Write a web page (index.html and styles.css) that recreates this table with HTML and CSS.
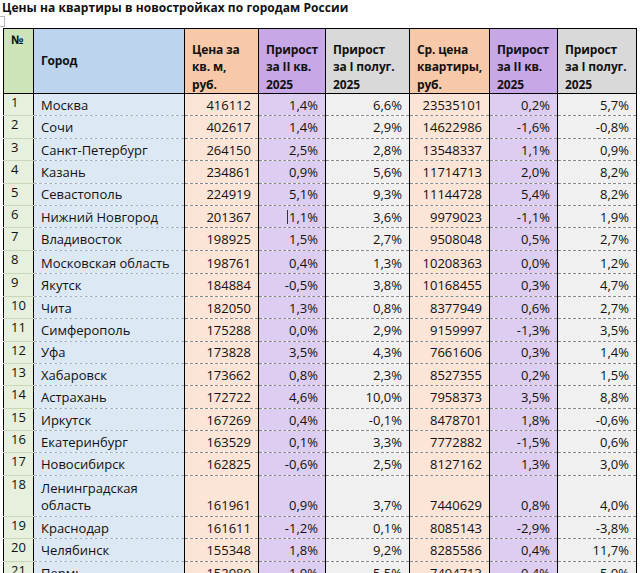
FILE: index.html
```html
<!DOCTYPE html>
<html lang="ru">
<head>
<meta charset="utf-8">
<title>Цены на квартиры</title>
<link rel="stylesheet" href="styles.css">
</head>
<body>
<div class="title">Цены на квартиры в новостройках по городам России</div>
<div class="gap"><span class="cellmark"></span></div>
<table class="grid">
<colgroup>
<col class="w-num"><col class="w-city"><col class="w-price"><col class="w-q"><col class="w-h"><col class="w-avg"><col class="w-q2"><col class="w-h2">
</colgroup>
<thead>
<tr>
<th class="num top">№</th>
<th class="city mid">Город</th>
<th class="price">Цена за<br>кв. м,<br>руб.</th>
<th class="q">Прирост<br>за II кв.<br>2025</th>
<th class="h">Прирост<br>за I полуг.<br>2025</th>
<th class="avg">Ср. цена<br>квартиры,<br>руб.</th>
<th class="q">Прирост<br>за II кв.<br>2025</th>
<th class="h">Прирост<br>за I полуг.<br>2025</th>
</tr>
</thead>
<tbody>
<tr><td class="num">1</td><td class="city">Москва</td><td class="price">416112</td><td class="q">1,4%</td><td class="h">6,6%</td><td class="avg">23535101</td><td class="q">0,2%</td><td class="h">5,7%</td></tr>
<tr><td class="num">2</td><td class="city">Сочи</td><td class="price">402617</td><td class="q">1,4%</td><td class="h">2,9%</td><td class="avg">14622986</td><td class="q">-1,6%</td><td class="h">-0,8%</td></tr>
<tr><td class="num">3</td><td class="city">Санкт-Петербург</td><td class="price">264150</td><td class="q">2,5%</td><td class="h">2,8%</td><td class="avg">13548337</td><td class="q">1,1%</td><td class="h">0,9%</td></tr>
<tr><td class="num">4</td><td class="city">Казань</td><td class="price">234861</td><td class="q">0,9%</td><td class="h">5,6%</td><td class="avg">11714713</td><td class="q">2,0%</td><td class="h">8,2%</td></tr>
<tr><td class="num">5</td><td class="city">Севастополь</td><td class="price">224919</td><td class="q">5,1%</td><td class="h">9,3%</td><td class="avg">11144728</td><td class="q">5,4%</td><td class="h">8,2%</td></tr>
<tr><td class="num">6</td><td class="city">Нижний Новгород</td><td class="price">201367</td><td class="q"><span class="caret"></span>1,1%</td><td class="h">3,6%</td><td class="avg">9979023</td><td class="q">-1,1%</td><td class="h">1,9%</td></tr>
<tr><td class="num">7</td><td class="city">Владивосток</td><td class="price">198925</td><td class="q">1,5%</td><td class="h">2,7%</td><td class="avg">9508048</td><td class="q">0,5%</td><td class="h">2,7%</td></tr>
<tr class="r8"><td class="num">8</td><td class="city">Московская область</td><td class="price">198761</td><td class="q">0,4%</td><td class="h">1,3%</td><td class="avg">10208363</td><td class="q">0,0%</td><td class="h">1,2%</td></tr>
<tr><td class="num">9</td><td class="city">Якутск</td><td class="price">184884</td><td class="q">-0,5%</td><td class="h">3,8%</td><td class="avg">10168455</td><td class="q">0,3%</td><td class="h">4,7%</td></tr>
<tr><td class="num">10</td><td class="city">Чита</td><td class="price">182050</td><td class="q">1,3%</td><td class="h">0,8%</td><td class="avg">8377949</td><td class="q">0,6%</td><td class="h">2,7%</td></tr>
<tr><td class="num">11</td><td class="city">Симферополь</td><td class="price">175288</td><td class="q">0,0%</td><td class="h">2,9%</td><td class="avg">9159997</td><td class="q">-1,3%</td><td class="h">3,5%</td></tr>
<tr><td class="num">12</td><td class="city">Уфа</td><td class="price">173828</td><td class="q">3,5%</td><td class="h">4,3%</td><td class="avg">7661606</td><td class="q">0,3%</td><td class="h">1,4%</td></tr>
<tr><td class="num">13</td><td class="city">Хабаровск</td><td class="price">173662</td><td class="q">0,8%</td><td class="h">2,3%</td><td class="avg">8527355</td><td class="q">0,2%</td><td class="h">1,5%</td></tr>
<tr><td class="num">14</td><td class="city">Астрахань</td><td class="price">172722</td><td class="q">4,6%</td><td class="h">10,0%</td><td class="avg">7958373</td><td class="q">3,5%</td><td class="h">8,8%</td></tr>
<tr><td class="num">15</td><td class="city">Иркутск</td><td class="price">167269</td><td class="q">0,4%</td><td class="h">-0,1%</td><td class="avg">8478701</td><td class="q">1,8%</td><td class="h">-0,6%</td></tr>
<tr><td class="num">16</td><td class="city">Екатеринбург</td><td class="price">163529</td><td class="q">0,1%</td><td class="h">3,3%</td><td class="avg">7772882</td><td class="q">-1,5%</td><td class="h">0,6%</td></tr>
<tr><td class="num">17</td><td class="city">Новосибирск</td><td class="price">162825</td><td class="q">-0,6%</td><td class="h">2,5%</td><td class="avg">8127162</td><td class="q">1,3%</td><td class="h">3,0%</td></tr>
<tr class="r18"><td class="num">18</td><td class="city">Ленинградская<br>область</td><td class="price">161961</td><td class="q">0,9%</td><td class="h">3,7%</td><td class="avg">7440629</td><td class="q">0,8%</td><td class="h">4,0%</td></tr>
<tr><td class="num">19</td><td class="city">Краснодар</td><td class="price">161611</td><td class="q">-1,2%</td><td class="h">0,1%</td><td class="avg">8085143</td><td class="q">-2,9%</td><td class="h">-3,8%</td></tr>
<tr><td class="num">20</td><td class="city">Челябинск</td><td class="price">155348</td><td class="q">1,8%</td><td class="h">9,2%</td><td class="avg">8285586</td><td class="q">0,4%</td><td class="h">11,7%</td></tr>
<tr><td class="num">21</td><td class="city">Пермь</td><td class="price">152980</td><td class="q">1,0%</td><td class="h">5,5%</td><td class="avg">7494713</td><td class="q">0,4%</td><td class="h">5,0%</td></tr>
</tbody>
</table>
</body>
</html>
```
FILE: styles.css
```css
html, body {
  margin: 0;
  padding: 0;
  background: #ffffff;
}
body {
  font-family: "Open Sans", "Noto Sans", sans-serif;
  font-size: 13px;
  color: #111111;
  overflow: hidden;
}
.title {
  font-weight: bold;
  font-size: 12px;
  letter-spacing: 0.05px;
  line-height: 16px;
  height: 16px;
  padding-left: 2px;
  white-space: nowrap;
}
.gap {
  height: 12px;
  display: flex;
  align-items: flex-end;
}
.cellmark {
  display: block;
  width: 4px;
  height: 9px;
  border: 1px solid #b5b5b5;
  border-left: none;
  margin-bottom: 1px;
}
.grid {
  margin-left: 3px;
  width: 633px;
  table-layout: fixed;
  border-collapse: collapse;
  border: 1px solid #000000;
}
.w-num { width: 30px; }
.w-city { width: 151px; }
.w-price { width: 74px; }
.w-q { width: 67px; }
.w-h { width: 84px; }
.w-avg { width: 80px; }
.w-q2 { width: 68px; }
.w-h2 { width: 79px; }

th, td {
  padding: 0 7px 0 7px;
  border-left: 1px solid #000000;
  border-right: 1px solid #000000;
  line-height: 17.5px;
  white-space: nowrap;
  overflow: hidden;
}
th {
  height: 64px;
  font-weight: bold;
  font-size: 12px;
  letter-spacing: -0.15px;
  text-align: left;
  vertical-align: bottom;
  border-bottom: 1px solid #000000;
  padding-bottom: 0;
}
th.top { vertical-align: top; padding-top: 2px; height: 62px; }
th.mid { vertical-align: middle; }

td {
  height: 20.4px;
  vertical-align: bottom;
  text-align: right;
  border-bottom: 1px dashed #8a8a8a;
  padding-bottom: 1px;
}
tr.r8 td { height: 21.6px; }
tr.r18 td { height: 39px; }
td.num {
  text-align: left;
  vertical-align: top;
  padding-top: 0;
  padding-bottom: 1px;
  border-bottom: 1px solid #c9d6b8;
}
td.city {
  text-align: left;
  border-bottom: 1px dashed #a9b4c2;
}

th.num { background: #cde3b8; }
td.num { background: #e6f0dc; }
th.city { background: #bdd4ee; }
td.city { background: #dde8f5; }
th.price, th.avg { background: #f8c9a8; }
td.price, td.avg { background: #fce4d6; }
th.q { background: #c8a7e6; }
td.q { background: #ddcdf1; }
th.h { background: #d9d9d9; }
td.h { background: #f0f0f0; }

.caret {
  display: inline-block;
  width: 1px;
  height: 14px;
  background: #333333;
  vertical-align: -2px;
  margin-right: 1px;
}
```
